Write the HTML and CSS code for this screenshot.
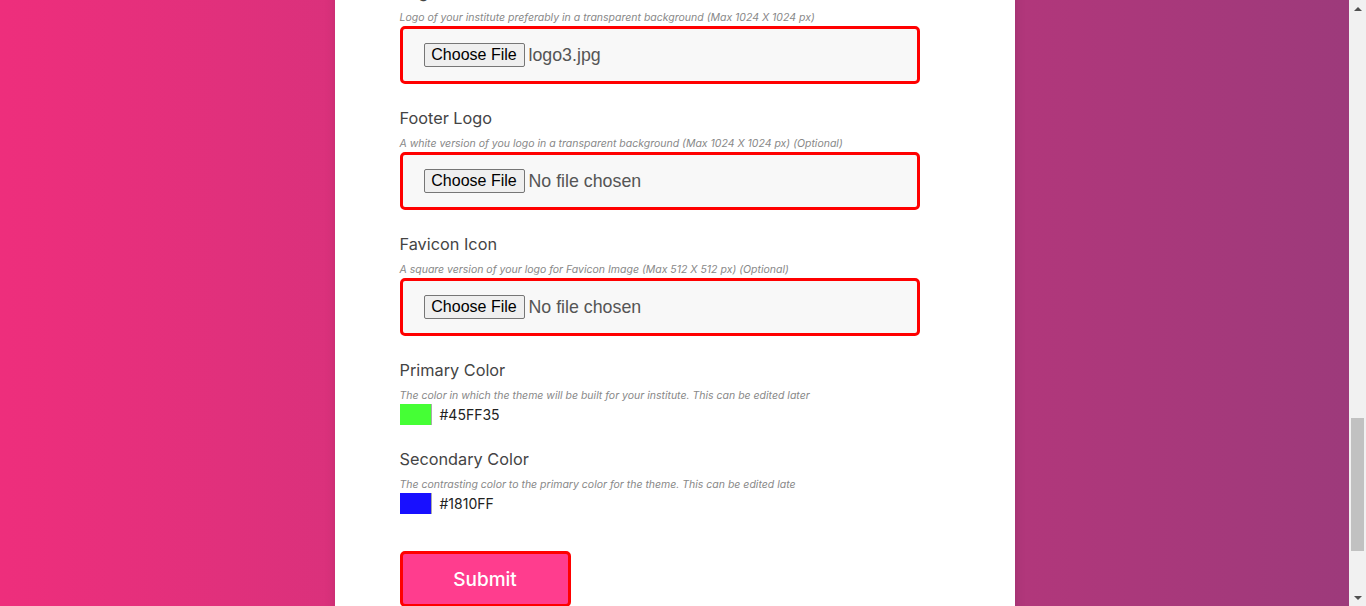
FILE: index.html
```html
<!DOCTYPE html>
<html lang="en">
<head>
<meta charset="utf-8">
<title>Institute Setup</title>
<link rel="stylesheet" href="styles.css">
</head>
<body>
<main class="page">
  <section class="panel">
    <div class="form-intro"></div>
    <form class="form">
      <div class="field">
        <label class="label">Logo</label>
        <p class="hint">Logo of your institute preferably in a transparent background (Max 1024 X 1024 px)</p>
        <div class="file-box">
          <button type="button" class="file-btn">Choose File</button>
          <span class="file-name">logo3.jpg</span>
        </div>
      </div>
      <div class="field">
        <label class="label">Footer Logo</label>
        <p class="hint">A white version of you logo in a transparent background (Max 1024 X 1024 px) (Optional)</p>
        <div class="file-box">
          <button type="button" class="file-btn">Choose File</button>
          <span class="file-name">No file chosen</span>
        </div>
      </div>
      <div class="field">
        <label class="label">Favicon Icon</label>
        <p class="hint">A square version of your logo for Favicon Image (Max 512 X 512 px) (Optional)</p>
        <div class="file-box">
          <button type="button" class="file-btn">Choose File</button>
          <span class="file-name">No file chosen</span>
        </div>
      </div>
      <div class="field">
        <label class="label">Primary Color</label>
        <p class="hint">The color in which the theme will be built for your institute. This can be edited later</p>
        <div class="color-row">
          <span class="swatch" style="background:#45ff35"></span>
          <span class="color-code">#45FF35</span>
        </div>
      </div>
      <div class="field">
        <label class="label">Secondary Color</label>
        <p class="hint">The contrasting color to the primary color for the theme. This can be edited late</p>
        <div class="color-row">
          <span class="swatch" style="background:#1810ff"></span>
          <span class="color-code">#1810FF</span>
        </div>
      </div>
      <button type="button" class="submit">Submit</button>
    </form>
  </section>
</main>
<div class="scrollbar" aria-hidden="true">
  <span class="sb-arrow sb-up"></span>
  <span class="sb-track"><span class="sb-thumb"></span></span>
  <span class="sb-arrow sb-down"></span>
</div>
<script src="script.js"></script>
</body>
</html>
```

FILE: styles.css
```css
html {
  overflow-y: scroll;
  scroll-behavior: auto;
}
body {
  margin: 0;
  padding-right: 17px;
  font-family: Inter, "Open Sans", sans-serif;
  background: linear-gradient(90deg, #ee2e7c 0%, #b1377b 75%, #9d3a7b 98.8%, #f1f1f1 98.8%);
}
.page {
  display: flex;
  justify-content: center;
}
.panel {
  width: 680px;
  background: #fff;
  box-shadow: 0 0 10px rgba(0, 0, 0, 0.12);
  padding: 0 95px 172px 65px;
  box-sizing: border-box;
}
.form-intro {
  height: 1807px;
}
.form {
  display: flex;
  flex-direction: column;
}
.field {
  margin-bottom: 22px;
}
.label {
  display: block;
  font-size: 16.3px;
  line-height: 24px;
  color: #444;
}
.hint {
  margin: 7px 0 1px;
  font-size: 10.5px;
  line-height: 14px;
  font-style: italic;
  color: #888;
  white-space: nowrap;
}
.file-box {
  height: 58px;
  box-sizing: border-box;
  border: 3px solid #ff0000;
  border-radius: 5px;
  background: #f8f8f8;
  padding: 0 21px;
  display: flex;
  align-items: center;
  gap: 4px;
  font-family: "Liberation Sans", Arial, sans-serif;
}
.file-btn {
  font-family: "Liberation Sans", Arial, sans-serif;
  font-size: 16px;
  height: 24px;
  width: 101px;
  padding: 0 6px;
  background: #efefef;
  border: 1px solid #767676;
  border-radius: 2px;
  color: #000;
}
.file-name {
  font-size: 17.8px;
  color: #555;
}
.color-row {
  display: flex;
  align-items: center;
  gap: 8px;
}
.swatch {
  width: 31px;
  height: 21px;
  border-right: 1px solid #aaa;
}
.color-code {
  font-size: 14px;
  color: #222;
}
.submit {
  margin-top: 15px;
  width: 171px;
  height: 56px;
  border: 3px solid #ff0000;
  border-radius: 5px;
  background: #ff3d8e;
  color: #fff;
  font-family: Inter, "Open Sans", sans-serif;
  font-size: 19px;
  font-weight: 500;
}
.scrollbar {
  position: fixed;
  top: 0;
  right: 0;
  width: 17px;
  height: 100vh;
  background: #f1f1f1;
  display: flex;
  flex-direction: column;
}
.sb-arrow {
  height: 17px;
  display: flex;
  align-items: center;
  justify-content: center;
}
.sb-arrow::before {
  content: "";
  border-left: 4px solid transparent;
  border-right: 4px solid transparent;
}
.sb-up::before {
  border-bottom: 4px solid #505050;
}
.sb-down::before {
  border-top: 4px solid #505050;
}
.sb-track {
  flex: 1;
  display: flex;
  flex-direction: column;
  align-items: center;
  padding-top: 401px;
}
.sb-thumb {
  width: 13px;
  height: 133px;
  background: #c1c1c1;
}
```

FILE: script.js
```js
window.addEventListener('load', function () {
  window.scrollTo(0, 1827);
});
window.scrollTo(0, 1827);
```
